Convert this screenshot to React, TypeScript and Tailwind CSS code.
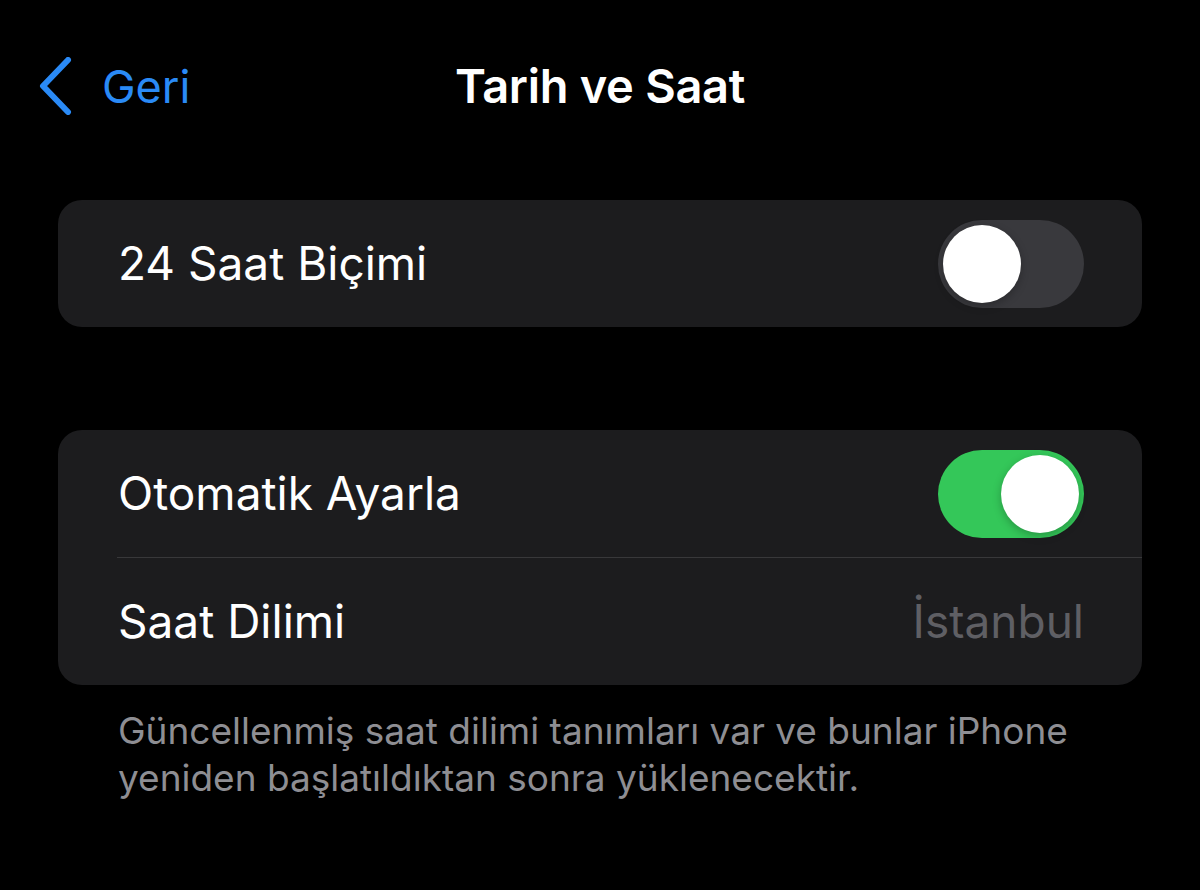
import React from 'react';

const font = { fontFamily: 'Inter, "Noto Sans", sans-serif' };

const Toggle: React.FC<{ on: boolean }> = ({ on }) => (
  <div
    className={`flex h-[88px] w-[146px] items-center rounded-full p-[5px] ${
      on ? 'justify-end bg-[#34c759]' : 'justify-start bg-[#39393d]'
    }`}
  >
    <div className="h-[78px] w-[78px] rounded-full bg-white shadow-[0_3px_8px_rgba(0,0,0,0.25)]" />
  </div>
);

const Row: React.FC<{ label: string; children?: React.ReactNode }> = ({ label, children }) => (
  <div className="flex h-[127px] items-center justify-between pl-[60px] pr-[58px]">
    <span className="text-[46px] text-white">{label}</span>
    {children}
  </div>
);

export default function App() {
  return (
    <div className="min-h-[890px] w-full bg-black" style={font}>
      <header className="relative flex h-[172px] items-center px-[38px]">
        <button className="flex items-center gap-[28px] text-[#2a8af6]">
          <svg width="36" height="58" viewBox="0 0 36 58" fill="none">
            <path
              d="M30 3 L5 29 L30 55"
              stroke="currentColor"
              strokeWidth="6"
              strokeLinecap="round"
              strokeLinejoin="round"
            />
          </svg>
          <span className="text-[45px] leading-none">Geri</span>
        </button>
        <h1 className="absolute left-1/2 -translate-x-1/2 text-[47px] font-semibold tracking-[-0.3px] text-white">
          Tarih ve Saat
        </h1>
      </header>

      <main className="mt-[28px] px-[58px]">
        <section className="overflow-hidden rounded-[24px] bg-[#1c1c1e]">
          <Row label="24 Saat Biçimi">
            <Toggle on={false} />
          </Row>
        </section>

        <section className="mt-[103px] overflow-hidden rounded-[24px] bg-[#1c1c1e]">
          <Row label="Otomatik Ayarla">
            <Toggle on />
          </Row>
          <div className="ml-[59px] h-px bg-[#38383a]" />
          <Row label="Saat Dilimi">
            <span className="text-[46px] text-[#5f5f64]">İstanbul</span>
          </Row>
        </section>

        <p className="mt-[22px] px-[60px] text-[37px] leading-[47px] text-[#8e8e93]">
          Güncellenmiş saat dilimi tanımları var ve bunlar iPhone yeniden başlatıldıktan sonra
          yüklenecektir.
        </p>
      </main>
    </div>
  );
}
